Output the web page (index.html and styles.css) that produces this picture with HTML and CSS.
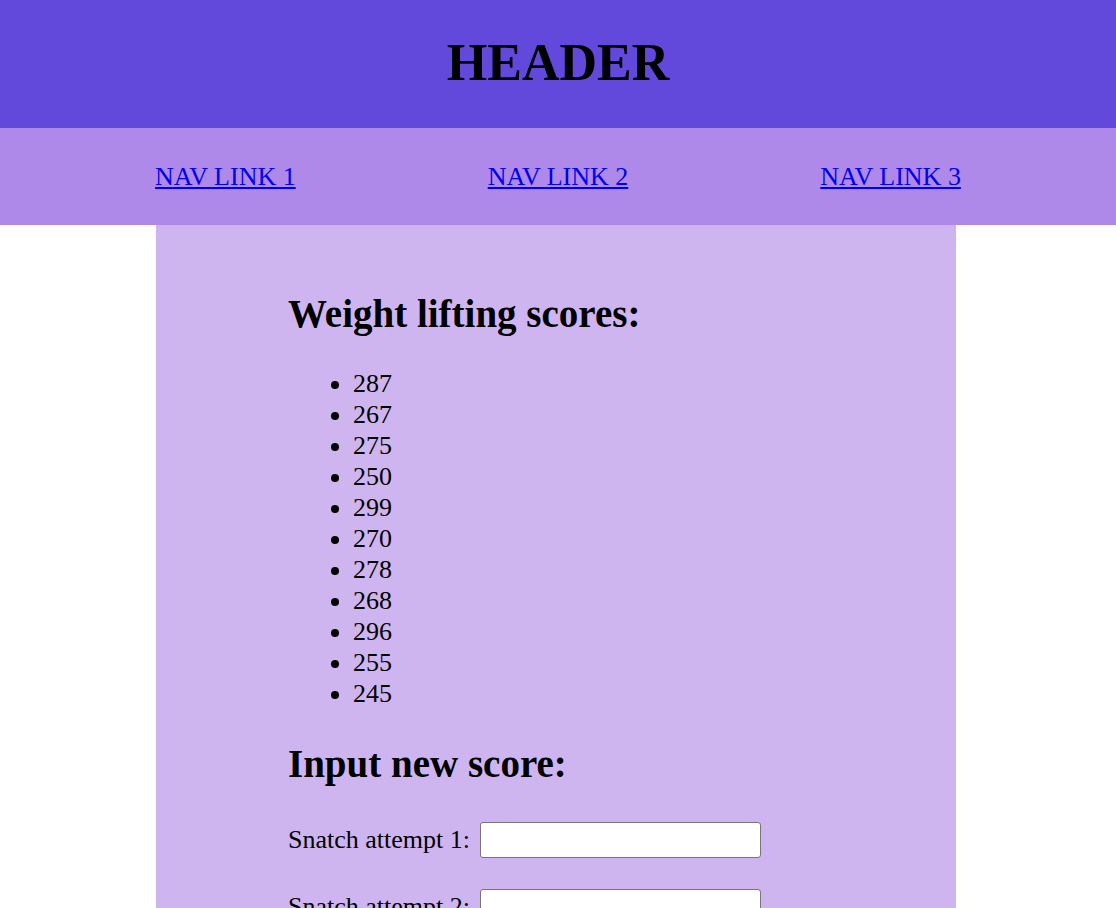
FILE: index.html
```html
<!DOCTYPE html>
<html lang="en">
<head>
<meta charset="utf-8">
<title>Weight lifting scores</title>
<link rel="stylesheet" href="styles.css">
</head>
<body>
<header class="site-header">
  <h1 class="site-title">HEADER</h1>
</header>
<nav class="site-nav">
  <a href="#" class="nav-link">NAV LINK 1</a>
  <a href="#" class="nav-link">NAV LINK 2</a>
  <a href="#" class="nav-link">NAV LINK 3</a>
</nav>
<main class="content">
  <h2 class="section-title">Weight lifting scores:</h2>
  <ul class="scores">
    <li>287</li>
    <li>267</li>
    <li>275</li>
    <li>250</li>
    <li>299</li>
    <li>270</li>
    <li>278</li>
    <li>268</li>
    <li>296</li>
    <li>255</li>
    <li>245</li>
  </ul>
  <h2 class="section-title">Input new score:</h2>
  <form class="score-form">
    <p class="row"><label for="s1">Snatch attempt 1:</label><input id="s1" type="text" class="field"></p>
    <p class="row"><label for="s2">Snatch attempt 2:</label><input id="s2" type="text" class="field"></p>
    <p class="row"><label for="s3">Snatch attempt 3:</label><input id="s3" type="text" class="field"></p>
  </form>
</main>
</body>
</html>
```

FILE: styles.css
```css
html, body {
  margin: 0;
  padding: 0;
}

body {
  font-family: "Liberation Serif", "Times New Roman", serif;
  font-size: 26px;
  color: #000;
  background: #fff;
}

.site-header {
  height: 128px;
  background: #6248db;
  display: flex;
  align-items: center;
  justify-content: center;
  padding-bottom: 3px;
  box-sizing: border-box;
}

.site-title {
  margin: 0;
  font-size: 52px;
  font-weight: bold;
}

.site-nav {
  height: 97px;
  background: #ae89e9;
  display: flex;
  align-items: center;
  justify-content: center;
  gap: 192px;
}

.nav-link {
  color: #0000ee;
  text-decoration: underline;
}

.content {
  box-sizing: border-box;
  width: 800px;
  margin-left: calc(50% - 402px);
  padding: 34px 132px 40px;
  background: #cfb5f0;
  min-height: 683px;
}

.section-title {
  font-size: 39px;
  font-weight: bold;
  margin: 32px 0;
}

.scores {
  margin: 26px 0;
  padding-left: 65px;
  line-height: 31px;
}

.score-form {
  margin: 33px 0 0;
}

.row {
  display: flex;
  align-items: center;
  gap: 10px;
  height: 41px;
  margin: 26px 0;
}

.field {
  box-sizing: border-box;
  width: 281px;
  height: 36px;
  border: 1px solid #767676;
  border-radius: 3px;
  background: #fff;
  padding: 1px 2px;
  font-size: 20px;
  font-family: inherit;
}
```
